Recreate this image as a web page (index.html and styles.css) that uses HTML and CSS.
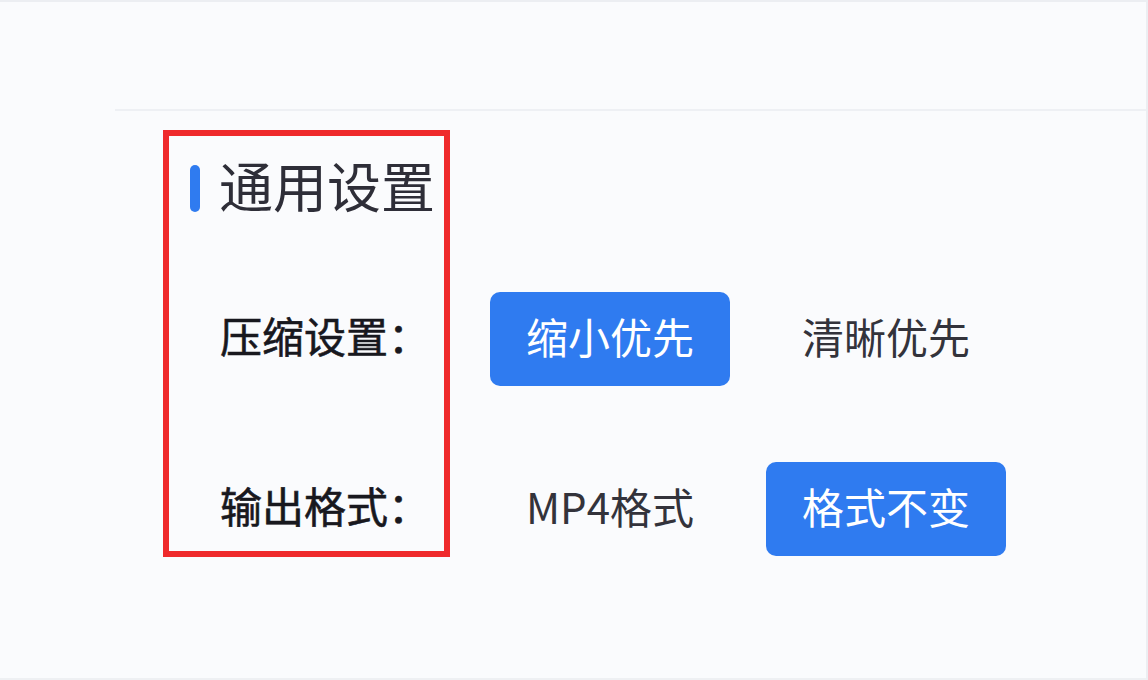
FILE: index.html
```html
<!DOCTYPE html>
<html lang="zh-CN">
<head>
<meta charset="utf-8">
<title>通用设置</title>
<link rel="stylesheet" href="styles.css">
</head>
<body>
<div class="window">
  <header class="topbar"></header>
  <main class="settings">
    <h2 class="section-title"><span class="bar"></span><span class="title-text">通用设置</span></h2>
    <div class="row">
      <span class="label">压缩设置：</span>
      <div class="options">
        <button class="opt active">缩小优先</button>
        <button class="opt">清晰优先</button>
      </div>
    </div>
    <div class="row">
      <span class="label">输出格式：</span>
      <div class="options">
        <button class="opt">MP4格式</button>
        <button class="opt active">格式不变</button>
      </div>
    </div>
  </main>
  <div class="highlight"></div>
</div>
</body>
</html>
```

FILE: styles.css
```css
html, body {
  margin: 0;
  padding: 0;
}

body {
  background: #fafbfd;
  font-family: "Noto Sans CJK SC", "Noto Sans", sans-serif;
}

.window {
  position: relative;
  height: 680px;
  box-sizing: border-box;
  border-top: 2px solid #eceef2;
  border-right: 2px solid #eceef2;
  border-bottom: 2px solid #eef0f3;
}

.topbar {
  height: 107px;
  margin-left: 115px;
  border-bottom: 2px solid #eef0f4;
}

.settings {
  padding: 47px 0 0 190px;
}

.section-title {
  display: flex;
  align-items: center;
  gap: 19px;
  height: 60px;
  margin: 0;
  font-size: 54px;
  line-height: 60px;
  font-weight: 400;
  color: #2e2e38;
}

.title-text {
  padding-bottom: 6px;
}

.bar {
  width: 10px;
  height: 47px;
  border-radius: 5px;
  background: #2f7bf0;
}

.row {
  display: flex;
  align-items: center;
  margin-left: 30px;
  margin-top: 74px;
}

.row + .row {
  margin-top: 76px;
}

.label {
  width: 270px;
  padding-bottom: 9px;
  font-size: 42px;
  font-weight: 400;
  color: #18181e;
  -webkit-text-stroke: 0.6px #18181e;
}

.options {
  display: flex;
  gap: 36px;
}

.opt {
  box-sizing: border-box;
  width: 240px;
  height: 94px;
  border: none;
  border-radius: 10px;
  background: transparent;
  font-family: inherit;
  font-size: 42px;
  font-weight: 400;
  color: #33333b;
  padding: 0 0 8px;
}

.opt.active {
  background: #2f7bf0;
  color: #ffffff;
}

.highlight {
  position: absolute;
  left: 163px;
  top: 128px;
  width: 287px;
  height: 427px;
  box-sizing: border-box;
  border: 6px solid #ef2a2c;
}
```
